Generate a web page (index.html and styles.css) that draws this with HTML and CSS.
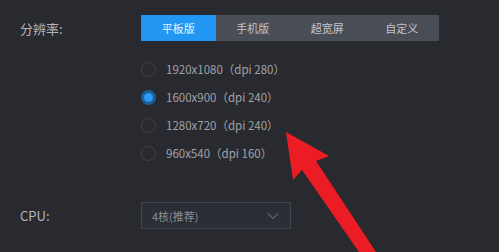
FILE: index.html
```html
<!DOCTYPE html>
<html lang="zh-CN">
<head>
    <meta charset="UTF-8">
    <title>分辨率设置</title>
    <link rel="stylesheet" href="styles.css">
</head>
<body>
    <div class="panel">
        <div class="row">
            <div class="label">分辨率:</div>
            <div class="tabs">
                <div class="tab active">平板版</div>
                <div class="tab">手机版</div>
                <div class="tab">超宽屏</div>
                <div class="tab">自定义</div>
            </div>
        </div>

        <div class="options">
            <div class="option"><span class="radio"></span>1920x1080（dpi 280）</div>
            <div class="option"><span class="radio checked"></span>1600x900（dpi 240）</div>
            <div class="option"><span class="radio"></span>1280x720（dpi 240）</div>
            <div class="option"><span class="radio"></span>960x540（dpi 160）</div>
        </div>

        <div class="row cpu-row">
            <div class="label">CPU:</div>
            <div class="select">
                <span>4核(推荐)</span>
                <svg class="chevron" width="12" height="8" viewBox="0 0 12 8">
                    <path d="M1 1.5 L6 6.5 L11 1.5" fill="none" stroke="#5d626c" stroke-width="1.2"/>
                </svg>
            </div>
        </div>
    </div>

    <!-- red annotation arrow -->
    <svg class="arrow" width="499" height="252" viewBox="0 0 499 252">
        <polygon points="286,132 329,156 316,161 376,252 359,252 302,170 293,180" fill="#ec1c24"/>
    </svg>
</body>
</html>
```

FILE: styles.css
```css
body {
    margin: 0;
    width: 499px;
    height: 252px;
    overflow: hidden;
    background: #282a2f;
    font-family: "Noto Sans CJK SC", "Noto Sans", sans-serif;
    color: #a4a6ab;
    position: relative;
}

.panel {
    padding: 15px 0 0 20px;
}

.row {
    display: flex;
    align-items: center;
}

.label {
    width: 121px;
    font-size: 13px;
    color: #b4b6ba;
}

.tabs {
    display: flex;
    background: #494d56;
    height: 26px;
}

.tab {
    width: 74.5px;
    text-align: center;
    line-height: 26px;
    font-size: 11px;
    color: #c2c4c8;
}

.tab.active {
    background: #2196f3;
    color: #e8f3fd;
}

.options {
    display: flex;
    flex-direction: column;
    padding: 14px 0 0 121px;
}

.option {
    display: flex;
    align-items: center;
    height: 28px;
    font-size: 11.5px;
    color: #a0a2a7;
}

.radio {
    width: 13px;
    height: 13px;
    border: 1px solid #41444b;
    border-radius: 50%;
    margin-right: 10px;
    box-sizing: content-box;
}

.radio.checked {
    width: 9px;
    height: 9px;
    background: #2b9bf5;
    border: 3px solid #1d5f95;
}

.cpu-row {
    margin-top: 35px;
}

.select {
    width: 150px;
    height: 27px;
    border: 1px solid #40444c;
    background: #2b2e34;
    display: flex;
    align-items: center;
    justify-content: space-between;
    padding: 0 10px;
    box-sizing: border-box;
    font-size: 11px;
    color: #8d9096;
}

.chevron {
    margin-right: 1px;
}

.arrow {
    position: absolute;
    left: 0;
    top: 0;
}
```
